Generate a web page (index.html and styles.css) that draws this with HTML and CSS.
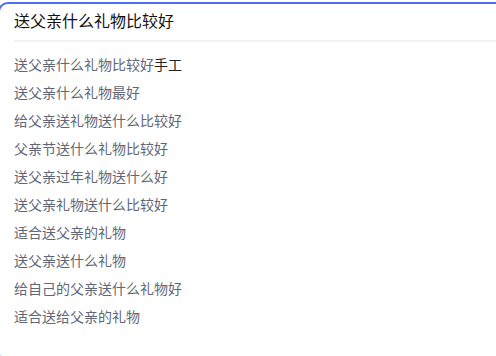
FILE: index.html
```html
<!DOCTYPE html>
<html lang="zh-CN">
<head>
    <meta charset="UTF-8">
    <meta name="viewport" content="width=device-width, initial-scale=1.0">
    <title>送父亲什么礼物比较好</title>
    <link rel="stylesheet" href="styles.css">
</head>
<body>

    <div class="search-box">
        <div class="query">送父亲什么礼物比较好</div>
        <ul class="suggest-list">
            <li>送父亲什么礼物比较好<b>手工</b></li>
            <li>送父亲什么礼物最好</li>
            <li>给父亲送礼物送什么比较好</li>
            <li>父亲节送什么礼物比较好</li>
            <li>送父亲过年礼物送什么好</li>
            <li>送父亲礼物送什么比较好</li>
            <li>适合送父亲的礼物</li>
            <li>送父亲送什么礼物</li>
            <li>给自己的父亲送什么礼物好</li>
            <li>适合送给父亲的礼物</li>
        </ul>
    </div>

</body>
</html>
```

FILE: styles.css
```css
:root {
    --blue: #4e6ef2;
    --text: #222222;
    --muted: #626675;
    --line: #f2f2f3;
}

* {
    margin: 0;
    padding: 0;
    box-sizing: border-box;
    font-family: 'Noto Sans CJK SC', 'Microsoft YaHei', sans-serif;
}

body {
    background-color: #ffffff;
    overflow: hidden;
}

.search-box {
    margin: 2px -12px 0 -2px;
    height: 362px;
    border: 2px solid var(--blue);
    border-radius: 10px;
    background-color: #ffffff;
}

.query {
    height: 36px;
    line-height: 33px;
    padding-left: 14px;
    font-size: 16px;
    color: #111111;
}

.suggest-list {
    list-style: none;
    margin-left: 14px;
    border-top: 2px solid var(--line);
    padding-top: 8px;
}

.suggest-list li {
    height: 28px;
    line-height: 28px;
    font-size: 14px;
    color: var(--muted);
}

.suggest-list b {
    font-weight: normal;
    color: var(--text);
}
```
